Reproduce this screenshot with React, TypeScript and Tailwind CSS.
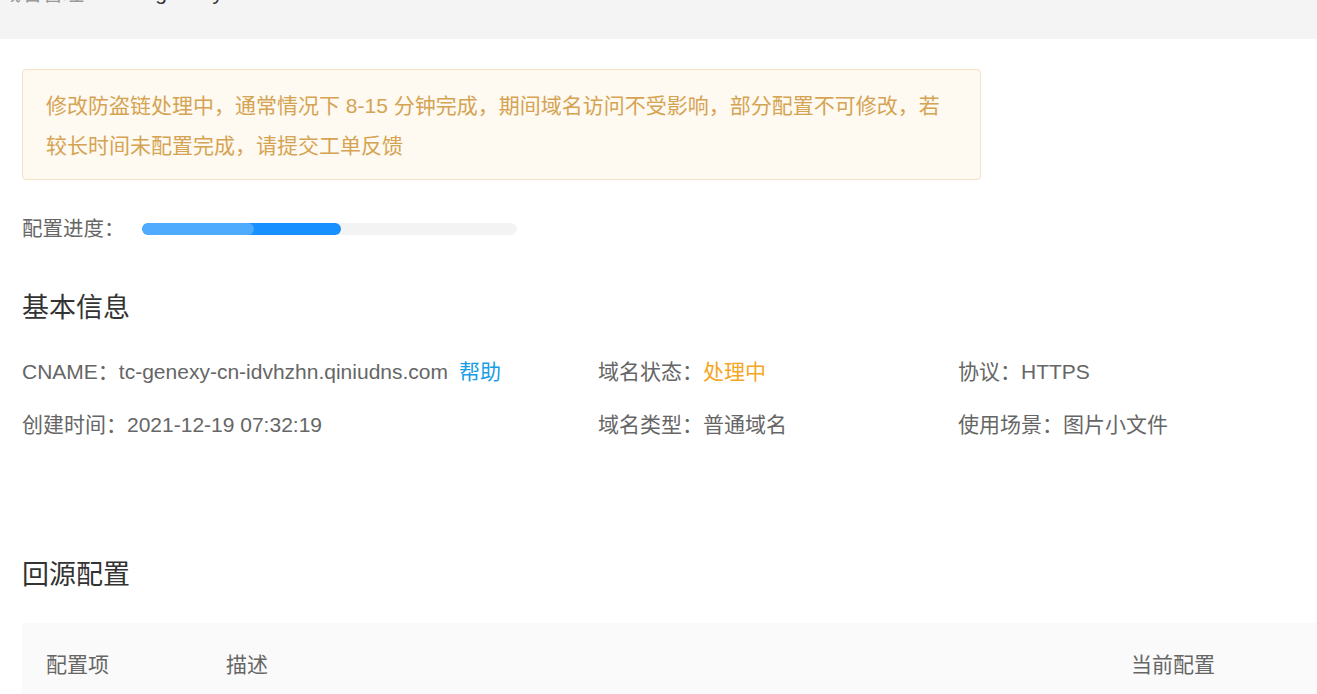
const font = { fontFamily: '"Liberation Sans", "Noto Sans CJK SC", sans-serif' };

const InfoItem = ({ label, value, extra }: { label: string; value: React.ReactNode; extra?: React.ReactNode }) => (
  <div className="flex items-center h-[30px] whitespace-nowrap">
    <span>{label}：</span>
    <span>{value}</span>
    {extra}
  </div>
);

export default function App() {
  return (
    <div className="min-h-screen bg-white text-[#666] overflow-hidden" style={font}>
      {/* top breadcrumb, scrolled mostly out of view */}
      <div className="h-[39px] bg-[#f4f4f4] overflow-hidden">
        <div className="-mt-[18px] h-[21px] text-[21px] leading-[21px] text-[#999] whitespace-nowrap flex">
          <span>域名管理</span>
          <span className="ml-[22px] text-[#ccc]">/</span>
          <span className="ml-[20px] text-[#333]">tc-genexy</span>
        </div>
      </div>

      <main className="pl-[22px] pt-[30px]">
        <div className="w-[959px] border border-[#f3e2c4] bg-[#fef9f1] rounded-[4px] px-[23px] pt-[16px] pb-[13px] text-[21px] leading-[40px] text-[#d5a453]">
          修改防盗链处理中，通常情况下 8-15 分钟完成，期间域名访问不受影响，部分配置不可修改，若较长时间未配置完成，请提交工单反馈
        </div>

        <div className="mt-[34px] flex items-center h-[30px]">
          <span className="w-[120px] text-[20.5px]">配置进度：</span>
          <div className="relative w-[375px] h-[12px] rounded-full bg-[#f3f3f3] overflow-hidden">
            <div className="absolute left-0 top-0 h-full w-[199px] rounded-full bg-[#1890ff]" />
            <div className="absolute left-0 top-0 h-full w-[112px] rounded-full bg-[#4eabfe]" />
          </div>
        </div>

        <h2 className="mt-[44px] text-[27px] leading-[40px] text-[#333] font-normal">基本信息</h2>

        <div className="mt-[29px] grid grid-cols-[576px_360px_1fr] gap-y-[23px] text-[21px]">
          <InfoItem
            label="CNAME"
            value="tc-genexy-cn-idvhzhn.qiniudns.com"
            extra={<a className="ml-[11px] text-[#169de6]">帮助</a>}
          />
          <InfoItem label="域名状态" value={<span className="text-[#f5a623]">处理中</span>} />
          <InfoItem label="协议" value="HTTPS" />
          <InfoItem label="创建时间" value="2021-12-19 07:32:19" />
          <InfoItem label="域名类型" value="普通域名" />
          <InfoItem label="使用场景" value="图片小文件" />
        </div>

        <h2 className="mt-[115px] text-[27px] leading-[40px] text-[#333] font-normal">回源配置</h2>

        <div className="mt-[28px] h-[84px] bg-[#fafafa] flex items-center text-[21px] whitespace-nowrap">
          <div className="pl-[24px] w-[204px]">配置项</div>
          <div className="w-[905px]">描述</div>
          <div>当前配置</div>
        </div>
      </main>
    </div>
  );
}
